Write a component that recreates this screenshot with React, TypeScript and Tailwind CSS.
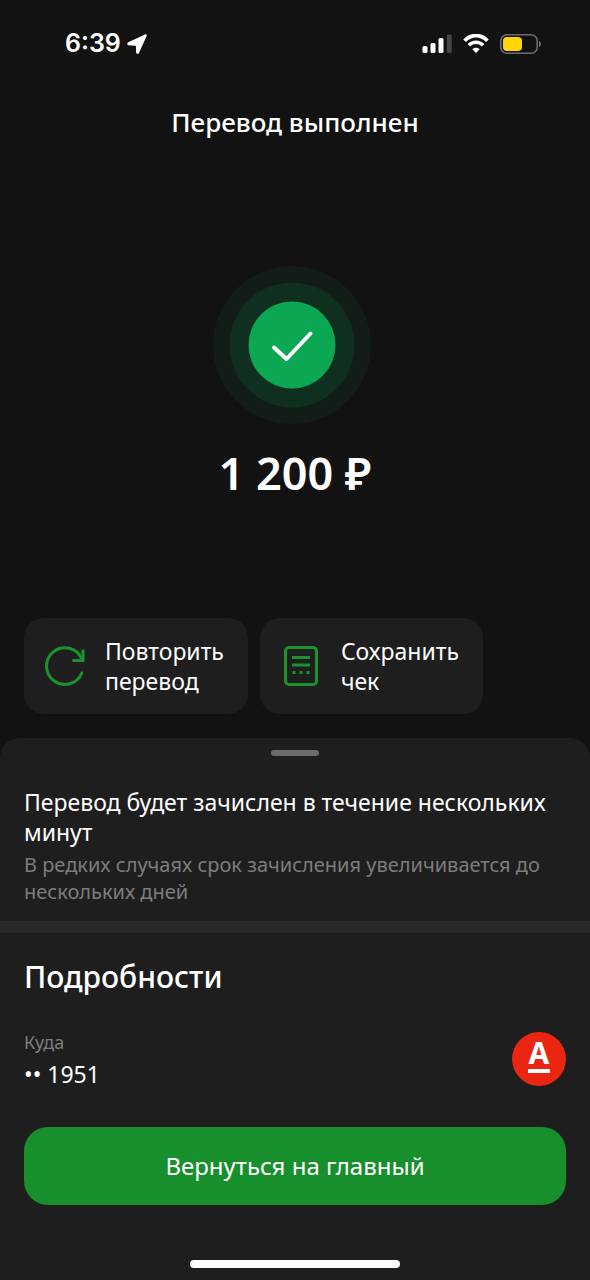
import type { ReactNode } from 'react';

interface ActionCardProps {
  icon: ReactNode;
  lines: [string, string];
}

function LocationArrow() {
  return (
    <svg width="20" height="20" viewBox="0 0 20 20" fill="currentColor" aria-hidden="true">
      <path d="M18 .5 1.200 8.200C-.2 8.900.1 11.200 1.500 11.300L8.200 11.700C8.800 11.700 9 12 9 12.500L9.100 18.400C9.200 19.900 11.400 20.300 12 18.900L19.600 2C20.100.9 19.100 0 18 .5Z" />
    </svg>
  );
}

function SignalIcon() {
  return (
    <svg width="30" height="20" viewBox="0 0 30 20" fill="currentColor" aria-hidden="true">
      <rect x="0.500" y="12" width="5" height="7" rx="1.500" />
      <rect x="8.500" y="9" width="5" height="10" rx="1.500" />
      <rect x="16.500" y="4" width="5" height="15" rx="1.500" />
      <rect x="24.800" y="0.500" width="5" height="18.500" rx="1.500" fill="#47474a" />
    </svg>
  );
}

function WifiIcon() {
  return (
    <svg width="26" height="20" viewBox="0 0 26 20" fill="none" stroke="currentColor" aria-hidden="true">
      <path d="M1.600 6.700C8-.1 18-.1 24.400 6.700" strokeWidth="3.800" />
      <path d="M5.900 11.200C9.900 7.200 16.100 7.200 20.100 11.200" strokeWidth="3.600" />
      <path d="M13 18.900 9.300 15.200C11.400 13.200 14.600 13.200 16.700 15.200Z" fill="currentColor" stroke="none" />
    </svg>
  );
}

function BatteryIcon() {
  return (
    <svg width="42" height="20" viewBox="0 0 42 20" fill="none" aria-hidden="true">
      <rect x="0.800" y="0.800" width="36.400" height="18.400" rx="6" stroke="#6d6d70" strokeWidth="1.600" />
      <rect x="3" y="3" width="19" height="14" rx="4" fill="#ffd60a" />
      <path d="M39 7c2.700 1 2.700 5 0 6Z" fill="#6d6d70" />
    </svg>
  );
}

function SuccessBadge() {
  return (
    <svg width="158" height="158" viewBox="0 0 158 158" fill="none" role="img" aria-label="Выполнено">
      <circle cx="79" cy="79" r="79" fill="#121d17" />
      <circle cx="79" cy="79" r="62.500" fill="#10301f" />
      <circle cx="79" cy="79" r="43.500" fill="#0ba753" />
      <path d="M61 81.500 73.500 93 97.500 67.500" stroke="#fff" strokeWidth="4" strokeLinecap="round" strokeLinejoin="round" />
    </svg>
  );
}

function RepeatIcon() {
  return (
    <svg width="40" height="40" viewBox="0 0 40 40" fill="none" stroke="#1c922e" strokeWidth="3" aria-hidden="true">
      <path d="M36.800 27A18.300 18.300 0 1 1 36.500 12.500" strokeLinecap="round" />
      <path d="M38 3.500V14.500H27.500" />
    </svg>
  );
}

function ReceiptIcon() {
  return (
    <svg width="40" height="40" viewBox="0 0 40 40" fill="none" stroke="#1c922e" strokeWidth="3" aria-hidden="true">
      <rect x="4.500" y="1.500" width="31" height="37" rx="3.500" />
      <path d="M11 11.500H29M11 19H29" strokeWidth="2.800" />
      <path d="M11.500 26.500H14.500M18.500 26.500H21.500M25.500 26.500H28.500" />
    </svg>
  );
}

function ActionCard({ icon, lines }: ActionCardProps) {
  return (
    <button className="flex items-center gap-5 rounded-[20px] bg-[#1e1e1e] py-[18px] pl-[21px] pr-6 text-left text-[23px] leading-[30px] font-[450]">
      {icon}
      <span>
        {lines[0]}
        <br />
        {lines[1]}
      </span>
    </button>
  );
}

export default function App() {
  return (
    <div className="flex min-h-screen flex-col bg-[#121212] font-['Noto_Sans',sans-serif] text-white">
      {/* Status bar */}
      <div className="flex h-22 items-center justify-between pl-[65px] pr-12">
        <div className="flex items-center gap-1.5">
          <span className="font-['Inter',sans-serif] text-[25px] font-semibold">6:39</span>
          <LocationArrow />
        </div>
        <div className="flex items-center gap-[11px]">
          <SignalIcon />
          <WifiIcon />
          <BatteryIcon />
        </div>
      </div>

      <h1 className="pt-4 text-center text-[26px] leading-9 font-medium">Перевод выполнен</h1>

      <div className="flex flex-col items-center pt-[126px] pr-1.5">
        <SuccessBadge />
      </div>
      <p className="pt-6 text-center text-[45px] leading-[50px] font-semibold">1 200 ₽</p>

      <div className="flex gap-3 px-6 pt-30">
        <ActionCard icon={<RepeatIcon />} lines={['Повторить', 'перевод']} />
        <ActionCard icon={<ReceiptIcon />} lines={['Сохранить', 'чек']} />
      </div>

      {/* Bottom sheet */}
      <div className="mt-6 flex grow flex-col rounded-t-[20px] bg-[#1e1e1e]">
        <div className="mx-auto mt-3 h-[6px] w-12 rounded-full bg-[#6c6c6c]" />

        <section className="px-6 pt-[31px] pb-4">
          <h2 className="text-[23px] leading-[30px] font-[450]">
            Перевод будет зачислен в течение нескольких минут
          </h2>
          <p className="pt-1 text-[20px] leading-[27px] text-[#7d7d7d]">
            В редких случаях срок зачисления увеличивается до нескольких дней
          </p>
        </section>

        <div className="h-3 bg-[#282828]" />

        <section className="px-6 pt-6">
          <h2 className="text-[30px] leading-10 font-medium">Подробности</h2>
          <div className="flex items-center justify-between pt-8">
            <div>
              <p className="text-[18px] leading-[26px] text-[#7d7d7d]">Куда</p>
              <p className="pt-1 text-[23px] leading-[30px]">•• 1951</p>
            </div>
            <div className="flex size-[54px] flex-col items-center justify-center gap-1 rounded-full bg-[#ea2612] pb-1">
              <span className="text-[30px] leading-6 font-bold">А</span>
              <span className="h-1 w-[22px] bg-white" />
            </div>
          </div>
        </section>

        <div className="px-6 pt-[38px]">
          <button className="h-[78px] w-full rounded-3xl bg-[#178f2c] text-[24px] font-[450]">Вернуться на главный</button>
        </div>

        {/* Home indicator */}
        <div className="mx-auto mt-auto mb-3 h-2 w-[210px] rounded-full bg-white" />
      </div>
    </div>
  );
}
